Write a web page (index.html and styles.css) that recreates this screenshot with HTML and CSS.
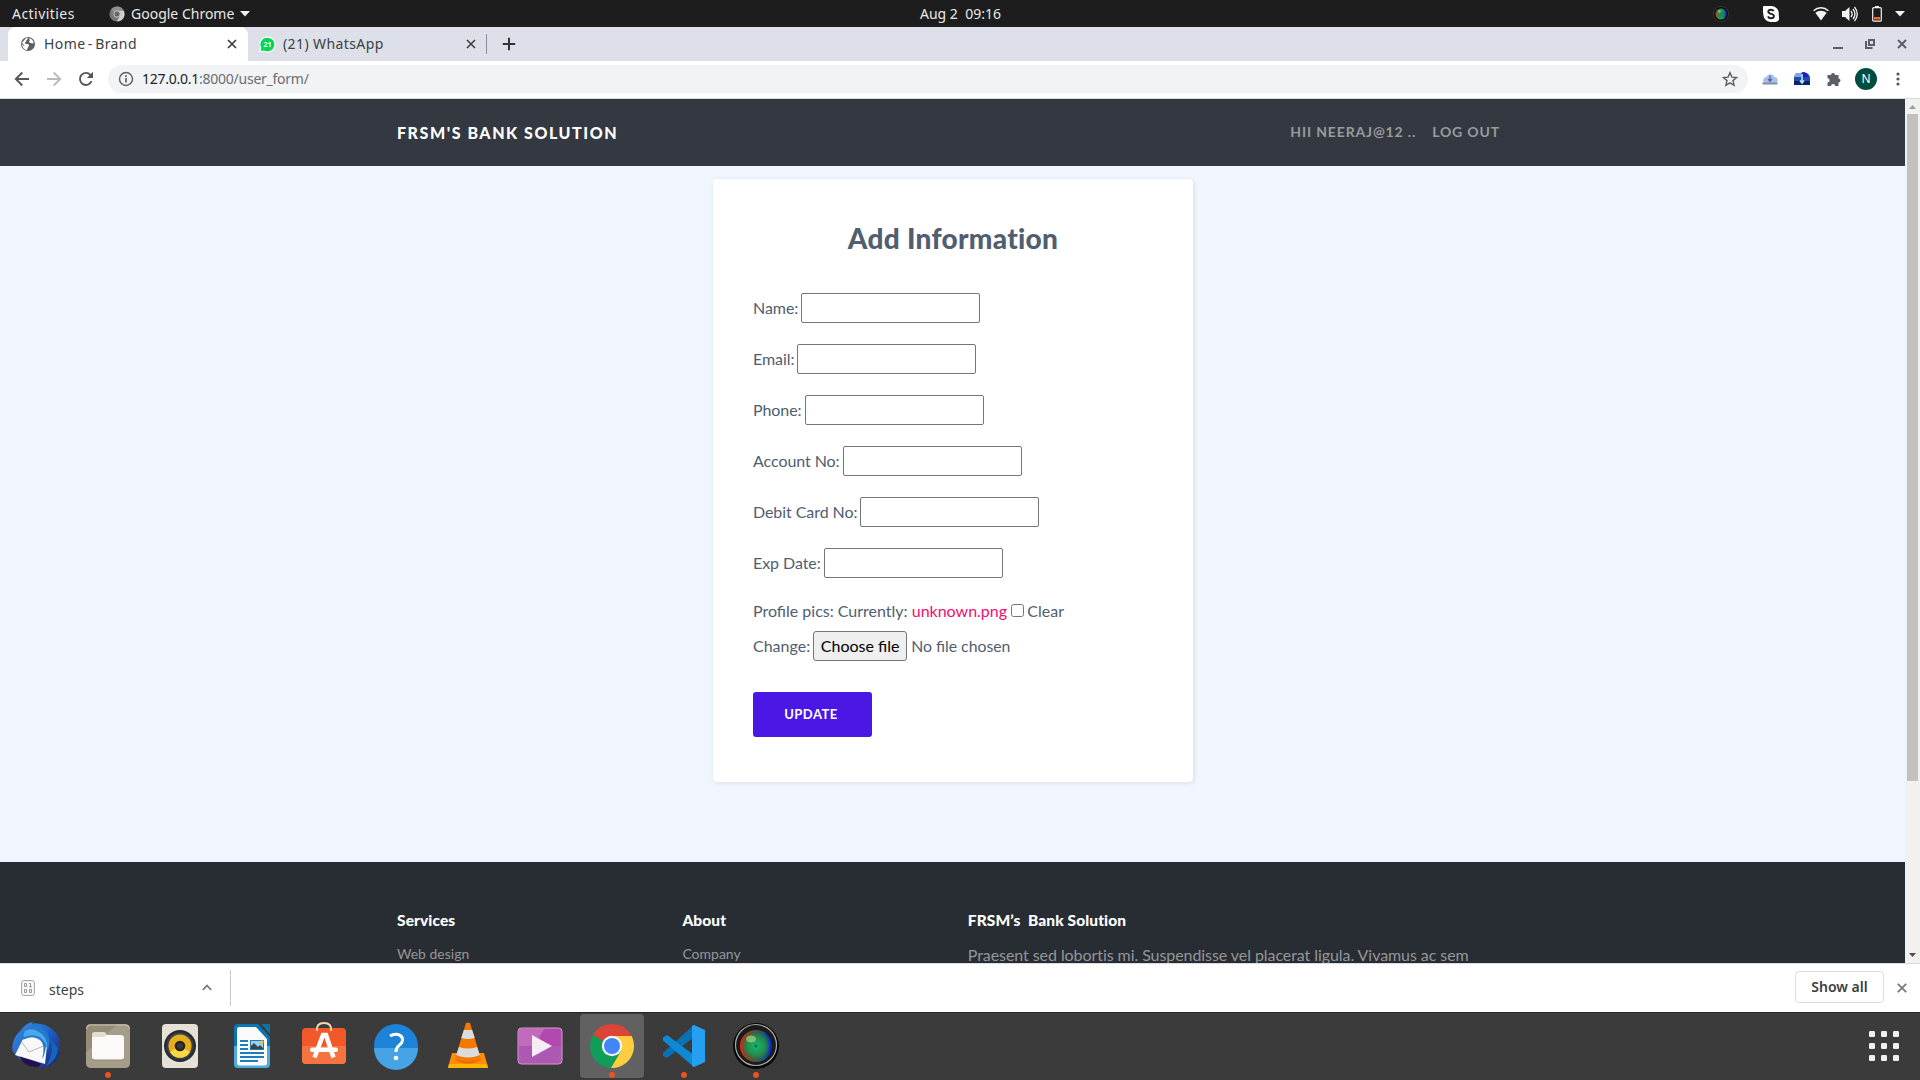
FILE: index.html
```html
<!DOCTYPE html>
<html lang="en">
<head>
<meta charset="utf-8">
<title>Home - Brand</title>
<link rel="stylesheet" href="styles.css">
</head>
<body>
<header class="topbar">
  <span class="activities">Activities</span>
  <svg class="app-icon" width="16" height="16" viewBox="0 0 16 16"><circle cx="8" cy="8" r="7.6" fill="#777"/><path d="M8 4.5h6.7A7.6 7.6 0 0 1 8 15.6l3-6z" fill="#d0d0d0"/><path d="M8 .4A7.6 7.6 0 0 1 14.7 4.5H8A3.5 3.5 0 0 0 5 7L2 3.3A7.6 7.6 0 0 1 8 .4z" fill="#8e8e8e"/><circle cx="8" cy="8" r="3.2" fill="#666" stroke="#ccc"/></svg>
  <span class="app-name">Google Chrome</span>
  <svg class="app-caret" width="10" height="6" viewBox="0 0 10 6"><path d="M0 0h10L5 5.6z" fill="#f2f2f2"/></svg>
  <span class="clock">Aug 2&nbsp; 09:16</span>
  <div class="tray">
    <svg width="16" height="16" viewBox="0 0 16 16"><use href="#lens"/></svg>
    <svg class="skype" width="16" height="16" viewBox="0 0 16 16"><path d="M4 0h4.5A7.4 7.4 0 0 1 15.6 9 4.3 4.3 0 0 1 12 16H7.5A7.5 7.5 0 0 1 .4 7.5 4.2 4.2 0 0 1 4 0z" fill="#fff"/><path d="M10.7 5.2C10.2 4.1 9.200 3.700 8 3.700c-1.700 0-2.700.8-2.700 2 0 2.800 5.600 1.400 5.600 4.300 0 1.500-1.200 2.300-2.900 2.300-1.500 0-2.600-.6-3-1.900" fill="none" stroke="#222" stroke-width="1.9"/></svg>
    <svg class="wifi" width="16" height="14" viewBox="0 0 16 14"><path d="M.6 3.700A11 11 0 0 1 15.400 3.700" fill="none" stroke="#f2f2f2" stroke-width="1.500"/><path d="M2.300 5.800A9 9 0 0 1 13.700 5.800L8 13.400z" fill="#f2f2f2"/></svg>
    <svg class="sound" width="16" height="16" viewBox="0 0 16 16"><path d="M0 5h3l4.500-4v14L3 11H0z" fill="#f2f2f2"/><path d="M9 5q2.300 3 0 6M11 3q4 5 0 10M12.500.8q5.500 7.200 0 14.400" fill="none" stroke="#f2f2f2" stroke-width="1.300"/></svg>
    <svg class="battery" width="10" height="16" viewBox="0 0 10 16"><path d="M3 0h4v2H3z" fill="#f2f2f2"/><rect x=".7" y="1.700" width="8.600" height="13.500" rx="1" fill="none" stroke="#f2f2f2" stroke-width="1.200"/><path d="M2 11h6v2.500H2z" fill="#f26b2c"/></svg>
    <svg class="tray-caret" width="10" height="6" viewBox="0 0 10 6"><path d="M0 0h10L5 5.600z" fill="#f2f2f2"/></svg>
  </div>
</header>

<div class="tabstrip">
  <div class="tab tab-active">
    <svg width="16" height="16" viewBox="0 0 16 16"><circle cx="8" cy="8" r="7" fill="#5b6066"/><path d="M6.500 1.600c2 .2 1.500 1.700.3 2.300S6.500 6 5.300 6.300 5 8 6.500 8s3 .2 2.300 2-1.500 2-1.800 4.200C4.500 14 2 11 2 8q2 2.600 2.700 2.300C4 8.500 2.500 8 2.200 6.500M9.200 2.200c2.300.4 3.800 2 4.500 4.300-1.200 1.800-2.300.4-3.300.2S8.300 5.800 9.500 5s-.7-1.500-.3-2.800z" fill="#fff"/></svg>
    <span class="tab-title title-home">Home - Brand</span>
    <svg class="tab-x" width="10" height="10" viewBox="0 0 10 10"><path d="M1 1l8 8M9 1l-8 8" stroke="#3c4043" stroke-width="1.700"/></svg>
  </div>
  <div class="tab tab-idle">
    <svg width="17" height="17" viewBox="0 0 17 17"><path d="M8.500.5a8 8 0 1 1-3.700 15.100L.5 16.500.9 11A8 8 0 0 1 8.500.5z" fill="#fff"/><path d="M8.500 1.700a6.800 6.800 0 1 1-3.300 12.700l-3.400.7.500-3.300A6.800 6.800 0 0 1 8.500 1.700z" fill="#00d757"/><text x="8.600" y="11.300" text-anchor="middle" class="badge-num">21</text></svg>
    <span class="tab-title title-wa">(21) WhatsApp</span>
    <svg class="tab-x" width="10" height="10" viewBox="0 0 10 10"><path d="M1 1l8 8M9 1l-8 8" stroke="#3c4043" stroke-width="1.600"/></svg>
  </div>
  <svg class="plus" width="14" height="14" viewBox="0 0 14 14"><path d="M7 .8v12.400M.8 7h12.400" stroke="#333639" stroke-width="2"/></svg>
  <div class="win-controls">
    <svg width="10" height="10" viewBox="0 0 10 10"><path d="M0 9h10" stroke="#5a5f66" stroke-width="2"/></svg>
    <svg width="10" height="10" viewBox="0 0 10 10"><path d="M4 1h5v5H4zM1 2v7h6.500" fill="none" stroke="#5a5f66" stroke-width="2"/></svg>
    <svg width="10" height="10" viewBox="0 0 10 10"><path d="M1 1l8 8M9 1l-8 8" stroke="#5a5f66" stroke-width="2"/></svg>
  </div>
</div>

<div class="toolbar">
  <svg width="16" height="16" viewBox="0 0 16 16"><path d="M15 8H2M8.300 1.500L1.800 8l6.500 6.500" fill="none" stroke="#54585d" stroke-width="1.900"/></svg>
  <svg width="16" height="16" viewBox="0 0 16 16"><path d="M1 8h13M7.700 1.500L14.200 8l-6.500 6.500" fill="none" stroke="#b9bbbe" stroke-width="1.900"/></svg>
  <svg width="16" height="16" viewBox="0 0 16 16"><path d="M13.500 10.200A6 6 0 1 1 12.400 3.900L14 5.500" fill="none" stroke="#54585d" stroke-width="1.900"/><path d="M15 .8v6.200H8.800z" fill="#54585d"/></svg>
  <div class="omnibox">
    <svg width="16" height="16" viewBox="0 0 16 16"><circle cx="8" cy="8" r="6.500" fill="none" stroke="#5a5f64" stroke-width="1.400"/><path d="M8 7v4.600M8 4.200v1.700" stroke="#5a5f64" stroke-width="1.700"/></svg>
    <span class="url"><b>127.0.0.1</b>:8000/user_form/</span>
    <svg class="star" width="16" height="16" viewBox="0 0 16 16"><path d="M8 1.700l1.900 4.400 4.700.4-3.600 3.100 1.100 4.700L8 11.800l-4.100 2.500L5 9.600 1.400 6.500l4.700-.4z" fill="none" stroke="#5a5f64" stroke-width="1.400"/></svg>
  </div>
  <div class="extensions">
    <svg width="16" height="16" viewBox="0 0 16 16"><path d="M2.500 12A3 3 0 0 1 2 7.300Q3 5.700 4.500 5.800A4.300 4.300 0 0 1 12.500 6a3.200 3.200 0 0 1 1.500 6z" fill="#9fc2fd"/><path d="M0 11.500h16l-1 2H1z" fill="#8290a4"/><path d="M8 4.500v5.500M6 8L8 10.200 10 8" fill="none" stroke="#666" stroke-width="1.300"/></svg>
    <svg width="16" height="16" viewBox="0 0 16 16"><path d="M0 5l2-3h12l2 3v2H0z" fill="#7ba9dc"/><path d="M7 2q4-3 8 3v1H8z" fill="#2a18c4"/><path d="M0 6h16v8H0z" fill="#1d4fa8"/><path d="M0 10h16v4H0z" fill="#102368"/><path d="M8 3v8M6 9.500L8 12l2-2.500" fill="none" stroke="#b6e5ff" stroke-width="1.600"/></svg>
    <svg width="16" height="16" viewBox="0 0 16 16"><path d="M1.500 4H5a2 2 0 1 1 4 0h3.500v3.500a2 2 0 1 1 0 4V15H9.200a2 2 0 0 0-4.200 0H1.500v-3.500a2 2 0 0 0 0-4.200z" fill="#5b6066"/></svg>
    <span class="avatar">N</span>
    <svg width="16" height="16" viewBox="0 0 16 16"><g fill="#54585d"><circle cx="8" cy="3" r="1.600"/><circle cx="8" cy="8" r="1.600"/><circle cx="8" cy="13" r="1.600"/></g></svg>
  </div>
</div>

<div class="viewport">
  <div class="page">
    <nav class="navbar">
      <span class="brand">FRSM'S BANK SOLUTION</span>
      <span class="nav-user">HII NEERAJ@12 ..</span>
      <span class="nav-out">LOG OUT</span>
    </nav>
    <main class="content">
      <form class="card">
        <h2>Add Information</h2>
        <p class="field">Name: <input type="text"></p>
        <p class="field">Email: <input type="text"></p>
        <p class="field">Phone: <input type="text"></p>
        <p class="field">Account No: <input type="text"></p>
        <p class="field">Debit Card No: <input type="text"></p>
        <p class="field">Exp Date: <input type="text"></p>
        <p class="pics">Profile pics: Currently: <a>unknown.png</a> <input type="checkbox"> Clear</p>
        <p class="change">Change: <button type="button" class="choose">Choose file</button><span class="chosen">No file chosen</span></p>
        <button type="button" class="update">UPDATE</button>
      </form>
    </main>
    <footer class="footer">
      <div class="col"><h3>Services</h3><a>Web design</a></div>
      <div class="col"><h3>About</h3><a>Company</a></div>
      <div class="col col-wide"><h3>FRSM’s&nbsp; Bank Solution</h3><p>Praesent sed lobortis mi. Suspendisse vel placerat ligula. Vivamus ac sem</p></div>
    </footer>
  </div>
  <div class="scrollbar">
    <svg width="15" height="17" viewBox="0 0 15 17"><path d="M4 10h7L7.500 6z" fill="#9b9b9b"/></svg>
    <div class="thumb"></div>
    <svg width="15" height="17" viewBox="0 0 15 17"><path d="M4 7h7l-3.500 4z" fill="#4d4d4d"/></svg>
  </div>
</div>

<div class="downloads">
  <svg width="14" height="16" viewBox="0 0 14 16"><rect x=".6" y=".6" width="12.800" height="14.800" rx="2" fill="#fafafa" stroke="#a2a2a2"/><path d="M3.500 3.500h2v3h-2zM3.500 9.500h2v3h-2zM8.500 9.500h2v3h-2zM8 3.500h1.500v3M8 6.800h3" fill="none" stroke="#999"/></svg>
  <span class="file">steps</span>
  <svg class="chev" width="10" height="7" viewBox="0 0 10 7"><path d="M.8 6L5 1.500 9.200 6" fill="none" stroke="#77797c" stroke-width="1.800"/></svg>
  <span class="divider"></span>
  <button type="button" class="show-all">Show all</button>
  <svg class="close" width="10" height="10" viewBox="0 0 10 10"><path d="M.8.800l8.400 8.400M9.200.800L.8 9.200" stroke="#777a7d" stroke-width="1.800"/></svg>
</div>

<div class="dock">
  <div class="app"><svg viewBox="0 0 48 48"><defs><linearGradient id="tb" x1="0" y1="0" x2="1" y2="1"><stop offset="0" stop-color="#3f8ee8"/><stop offset=".5" stop-color="#1c5fc4"/><stop offset="1" stop-color="#231a6b"/></linearGradient></defs><path d="M9 8Q15 0 21 0l-1 2q12-2 21 6 9 8 7 22-2 9-8 12l-3 4-1-3q-4 4-9 4l2-3q-14 1-22-8L1 30Q-2 18 9 8z" fill="url(#tb)"/><path d="M7 32l22 10-3 3Q10 45 7 32z" fill="#24104f"/><path d="M12 15h24l-3 27L3 33z" fill="#f8f8f8"/><path d="M9 19l8 11 17-7" fill="none" stroke="#999" stroke-width=".7"/><path d="M9 18Q9 9 18 7l4-6q5 2 11 7 7 7 3 20l-2-4q-1 9-4 13 4-14-2-19-7-5-15-1z" fill="#237acd"/><path d="M13 9q8-5 18 4 5 6 4 13-3-10-10-12-6-2-12 1l-2-1z" fill="#4aa7e8"/><path d="M38 17q6 10-4 27 11-5 12-18z" fill="#1666bb"/></svg></div>
  <div class="app running"><svg viewBox="0 0 48 48"><rect x="2" y="2" width="44" height="44" rx="4.500" fill="#a59c89"/><path d="M2 30L34 2H6.500A4.500 4.500 0 0 0 2 6.500z" fill="#958c77"/><path d="M2.500 7a4.500 4.500 0 0 1 4-4h35a4.500 4.500 0 0 1 4 4" fill="none" stroke="#c9c2b3"/><path d="M8 13q0-3 3-3h9q2 0 3 3h14q3 0 3 3v20q0 2.500-3 2.500H11q-3 0-3-2.500z" fill="#867d6b" opacity=".6"/><path d="M8 18v-5.500q0-2.500 2.500-2.500H20q2 0 3 3l-1 5z" fill="#e3dccf"/><path d="M8 16q0-1 2-1h10l3-2h14q3 0 3 3v19q0 2.500-3 2.500H11q-3 0-3-2.500z" fill="#fbfaf8"/></svg></div>
  <div class="app"><svg viewBox="0 0 48 48"><rect x="6" y="2" width="36" height="44" rx="4" fill="#e6e1d6"/><circle cx="24" cy="24" r="16" fill="#292b31"/><circle cx="24" cy="24" r="13.500" fill="#3a404c"/><circle cx="24" cy="24" r="11.500" fill="#e5ae1b"/><path d="M14 30a11.500 11.500 0 0 0 20 0L24 24z" fill="#fbd846"/><circle cx="24" cy="24" r="5.300" fill="#222"/><circle cx="24" cy="24" r="3" fill="#383838"/></svg></div>
  <div class="app"><svg viewBox="0 0 48 48"><path d="M10 2h20l12 13v27q0 4-4 4H10q-4 0-4-4V6q0-4 4-4z" fill="#0876b2"/><path d="M6 24h36v18q0 4-4 4H10q-4 0-4-4z" fill="#4dacdc"/><path d="M11 5h17l11 12v24q0 2.500-2.500 2.500H11Q9 43 9 41V8q0-3 2-3z" fill="#fafafa"/><path d="M33 2h9v10z" fill="#0e72a6"/><path d="M12 19h8M12 23h8M12 27h8M12 31h24M12 35h24M12 39h18" stroke="#1d7eb8" stroke-width="2"/><path d="M22 18h14v10H22z" fill="#1b7bb2"/><path d="M23 19h12v8H23z" fill="#94d3ef"/><path d="M23 27v-3l3-3 4 4 2-2 3 3v1z" fill="#42423c"/><circle cx="34" cy="20" r="1.700" fill="#f7bd24"/></svg></div>
  <div class="app"><svg viewBox="0 0 48 48"><rect x="2" y="6" width="44" height="36" rx="4" fill="#f2592a"/><path d="M2 24h44v14q0 4-4 4H6q-4 0-4-4z" fill="#f5733f"/><path d="M17 9Q16 1 24 1t7 8" fill="none" stroke="#f6d8ac" stroke-width="2"/><path d="M14.500 35.500L23 13h3l7.500 22.500" fill="none" stroke="#fff" stroke-width="4.500"/><rect x="10" y="25.500" width="28" height="4.500" rx="2.200" fill="#fff"/></svg></div>
  <div class="app"><svg viewBox="0 0 48 48"><circle cx="24" cy="24" r="22" fill="#1d83d9"/><path d="M2 26a22 22 0 0 0 44 0z" fill="#46a3e6"/><path d="M18 14q4-2.500 8-1.500 5 1.500 4.500 6-.5 3-3.500 5-3 2-3 6.500" fill="none" stroke="#fff" stroke-width="3"/><circle cx="24" cy="36" r="2.300" fill="#fff"/></svg></div>
  <div class="app"><svg viewBox="0 0 48 48"><path d="M8 31h32l4 14.500H4z" fill="#ff8c0a"/><path d="M5 42h38l1 4H4z" fill="#ffb500"/><path d="M14 30h20l3 8q-13 7-26 0z" fill="#e76700"/><path d="M22 1q2-1 4 0l11 36q-13 6-26 0z" fill="#f57900"/><path d="M19.800 8h8.400l2.600 8q-7 2-13.600 0zM15 25q9 3 18 0l2.800 8q-12 5-23.600 0z" fill="#dcdcdc"/></svg></div>
  <div class="app"><svg viewBox="0 0 48 48"><rect x="2" y="6" width="44" height="36" rx="3.500" fill="#b349ae" stroke="#d79fd3"/><path d="M3 7h25l-9 17H3z" fill="#c26abc"/><path d="M3 24h42v14q0 3-3 3H6q-3 0-3-3z" fill="#ad59b3"/><path d="M16 13l20 11-20 11z" fill="#f5edf5"/></svg></div>
  <div class="app running focused"><svg viewBox="0 0 48 48"><path d="M24 24L4.900 13A22 22 0 0 1 43.100 13z" fill="#db4437"/><path d="M24 24L5 13a22 22 0 0 0 18 33l10-17z" fill="#0f9d58"/><path d="M24 14h19.600A22 22 0 0 1 23 46l10-17z" fill="#ffcd40"/><path d="M24 14h19.600L43 13 33 8z" fill="#db4437"/><circle cx="24" cy="24" r="10.200" fill="#f5f5f5"/><circle cx="24" cy="24" r="8" fill="#4285f4"/></svg></div>
  <div class="app running"><svg viewBox="0 0 48 48"><path d="M34 3L3 31v3l4 2 27-21z" fill="#0872b5"/><path d="M7 13l-4 2.500v3L34 45V33z" fill="#0d8ad3"/><path d="M34 3l11 5v32l-11 5-2-1V4z" fill="#25a0f0"/></svg></div>
  <div class="app running"><svg viewBox="0 0 48 48"><defs><radialGradient id="glass" cx=".5" cy=".5" r=".5"><stop offset="0" stop-color="#17b873"/><stop offset=".55" stop-color="#1f9350"/><stop offset=".8" stop-color="#2a7a45" stop-opacity=".75"/><stop offset="1" stop-color="#225533" stop-opacity="0"/></radialGradient><linearGradient id="rim"><stop offset="0" stop-color="#f32015"/><stop offset=".25" stop-color="#8a4a1c"/><stop offset=".75" stop-color="#0a5f8b"/><stop offset="1" stop-color="#1015e8"/></linearGradient></defs><circle cx="24" cy="24" r="23" fill="#080808"/><circle cx="24" cy="23" r="20.500" fill="#1b1b1b" stroke="#aaa" stroke-width="1.200"/><circle cx="24" cy="24" r="16" fill="url(#rim)"/><circle cx="24" cy="24" r="15" fill="url(#glass)"/><ellipse cx="19" cy="17" rx="5" ry="3.500" fill="#c0dc91" opacity=".6"/><circle cx="24" cy="24" r="1.500" fill="#073"/></svg></div>
  <svg class="grid" width="30" height="30" viewBox="0 0 30 30"><g fill="#f0f0ee"><rect width="6" height="6" rx="1.300"/><rect x="12" width="6" height="6" rx="1.300"/><rect x="24" width="6" height="6" rx="1.300"/><rect y="12" width="6" height="6" rx="1.300"/><rect x="12" y="12" width="6" height="6" rx="1.300"/><rect x="24" y="12" width="6" height="6" rx="1.300"/><rect y="24" width="6" height="6" rx="1.300"/><rect x="12" y="24" width="6" height="6" rx="1.300"/><rect x="24" y="24" width="6" height="6" rx="1.300"/></g></svg>
</div>
<svg width="0" height="0" class="defs"><defs><linearGradient id="mini"><stop offset="0" stop-color="#c23322"/><stop offset=".4" stop-color="#18a35c"/><stop offset=".65" stop-color="#18935c"/><stop offset="1" stop-color="#1a28df"/></linearGradient><g id="lens"><circle cx="8" cy="8" r="7.500" fill="#090909" stroke="#494949" stroke-width=".7"/><circle cx="8" cy="8" r="5.600" fill="url(#mini)"/><circle cx="8.300" cy="8.500" r="2.600" fill="#188c55"/><circle cx="6.500" cy="5.500" r="1.200" fill="#8dbc7c"/></g></defs></svg>
</body>
</html>
```
FILE: styles.css
```css
* { box-sizing: border-box; }
body { margin: 0; width: 1920px; height: 1080px; overflow: hidden; display: flex; flex-direction: column; font-family: "Noto Sans", sans-serif; background: #fff; }
svg { display: block; flex: none; }
.defs { position: absolute; }
span { white-space: nowrap; }

.topbar { height: 27px; flex: none; background: #1d1d1d; color: #e8e8e8; display: grid; grid-template-columns: 109px 22px 109px 680px 95px 1fr; align-items: center; font-size: 14px; line-height: 25px; }
.activities { padding-left: 12px; letter-spacing: .45px; }
.tray { display: flex; align-items: center; justify-content: flex-end; padding-right: 15px; }
.skype { margin-left: 34px; }
.wifi { margin-left: 34px; }
.sound { margin-left: 13px; }
.battery { margin-left: 14px; }
.tray-caret { margin-left: 13px; }

.tabstrip { height: 34px; flex: none; background: #dde0e8; display: flex; align-items: center; padding-left: 8px; color: #3c4043; }
.tab { height: 34px; display: flex; align-items: center; }
.tab-active { width: 240px; background: #fff; border-radius: 8px 8px 0 0; padding: 0 11px 0 12px; }
.tab-idle { width: 239px; padding: 0 10px 0 11px; border-right: 1px solid #8a8d93; height: 20px; }
.tab-title { font-size: 14px; margin-left: 8px; line-height: 20px; }
.title-home { letter-spacing: .4px; word-spacing: -1.6px; }
.title-wa { margin-left: 7px; letter-spacing: .4px; }
.tab-x { margin-left: auto; }
.badge-num { font-size: 7px; font-weight: 700; fill: #fff; font-family: "Noto Sans", sans-serif; }
.plus { margin-left: 15px; }
.win-controls { margin-left: auto; display: flex; gap: 22px; padding-right: 13px; }

.toolbar { height: 38px; flex: none; display: flex; align-items: center; gap: 16px; padding: 0 14px 1px; border-bottom: 1px solid #d5d8dd; background: #fff; }
.omnibox { width: 1640px; height: 28px; margin-left: -2px; border-radius: 14px; background: #f1f3f4; display: flex; align-items: center; padding: 0 10px; flex: none; }
.url { font-size: 14px; margin-left: 8px; letter-spacing: -.25px; line-height: 26px; color: #6a6e73; }
.url b { font-weight: 400; color: #202124; }
.star { margin-left: auto; }
.extensions { display: flex; gap: 16px; align-items: center; margin-left: -2px; }
.avatar { width: 22px; height: 22px; margin: 0 -3px; border-radius: 50%; background: #004d40; color: #fff; font-size: 12px; line-height: 22px; text-align: center; }

.viewport { height: 864px; flex: none; display: flex; overflow: hidden; }
.page { width: 1905px; background: #f0f5fe; font-family: Lato, sans-serif; color: #505e6f; display: flex; flex-direction: column; }
.navbar { height: 67px; flex: none; background: #343840; display: flex; align-items: center; padding: 0 405px 1px 397px; font-weight: 700; }
.brand { font-size: 16px; font-weight: 900; letter-spacing: 1.55px; color: #fff; }
.nav-user, .nav-out { font-size: 14px; letter-spacing: .85px; line-height: 18px; padding-bottom: 1px; color: #999b9f; }
.nav-user { margin-left: auto; margin-right: 16px; }
.content { height: 696px; flex: none; padding: 13px 0 0 1px; display: flex; justify-content: center; align-items: flex-start; }
.card { width: 480px; height: 603px; background: #fff; border-radius: 4px; box-shadow: 1px 1px 5px rgba(0,0,0,.1); padding: 40px; margin: 0; font-size: 16px; line-height: 24px; }
.card h2 { margin: 0; font: 900 28px/38px Lato, sans-serif; letter-spacing: .3px; text-align: center; padding-bottom: 36px; }
.card p { margin: 0; }
.card .field { display: flex; align-items: flex-start; gap: 3px; height: 30px; margin-bottom: 21px; line-height: 30px; letter-spacing: -.07px; }
.field input { width: 179px; height: 30px; border: 1px solid #767676; border-radius: 2px; padding: 1px 2px; font: 16px/24px Lato, sans-serif; margin: 0; background: #fff; }
.pics { height: 24px; }
.pics a { color: #f20d6f; }
.pics input { margin: 0 -1px 0 0; width: 13px; height: 13px; }
.card .change { display: flex; align-items: center; height: 30px; margin-top: 8px; }
.choose { width: 94px; height: 30px; margin-left: 3px; padding: 0; border: 1px solid #767676; border-radius: 3px; background: #efefef; font: 16px/26px Lato, sans-serif; color: #000; }
.chosen { margin-left: 4px; font-size: 15.8px; }
.update { display: block; margin-top: 31px; width: 119px; height: 45px; padding: 0 3px 1px 0; border: 0; border-radius: 3px; background: #4a17e5; color: #fff; font: 700 13px/20px Lato, sans-serif; letter-spacing: .5px; }
.footer { flex: 1; background: #282d33; display: flex; padding: 48px 0 0 397px; color: #94969a; }
.col { width: 285.4px; }
.col-wide { width: 540px; }
.footer h3 { margin: 0; font: 900 15.5px/20px Lato, sans-serif; letter-spacing: .1px; color: #fff; white-space: nowrap; }
.footer a { display: block; font-size: 14px; line-height: 20px; margin-top: 14px; }
.footer p { margin: 13px 0 0; font-size: 16px; line-height: 24px; letter-spacing: -.07px; white-space: nowrap; }
.scrollbar { width: 15px; background: #f1f1f1; display: flex; flex-direction: column; }
.thumb { width: 11px; height: 667px; margin: -2px 2px auto; background: #c1c1c1; }

.downloads { height: 49px; flex: none; background: #fff; border-top: 1px solid #dadce0; display: flex; align-items: center; padding: 0 13px 1px 21px; color: #3c4043; }
.file { font-size: 14px; margin-left: 14px; width: 36px; padding-top: 3px; }
.chev { margin-left: 117px; }
.divider { width: 1px; height: 36px; margin-left: 18px; background: #c9c9cb; }
.show-all { margin: 0 0 1px auto; width: 89px; height: 32px; border: 1px solid #dadce0; border-radius: 4px; background: #fff; color: #3c4043; font: 600 14px/20px "Noto Sans", sans-serif; padding: 0 0 1px; }
.close { margin-left: 13px; }

.dock { height: 68px; flex: none; background: #3b3b3b; box-shadow: inset 0 1px #252525; display: flex; align-items: center; }
.app { width: 72px; height: 68px; position: relative; display: flex; justify-content: center; align-items: center; }
.app svg { width: 48px; height: 48px; }
.running::after { content: ""; position: absolute; left: 33px; bottom: 2px; width: 6px; height: 6px; border-radius: 50%; background: #e95420; }
.focused { width: 64px; height: 64px; margin: 0 4px; background: #616161; border-radius: 4px; }
.focused::after { left: 29px; bottom: 0; }
.grid { margin: 0 21px 0 auto; }
```
